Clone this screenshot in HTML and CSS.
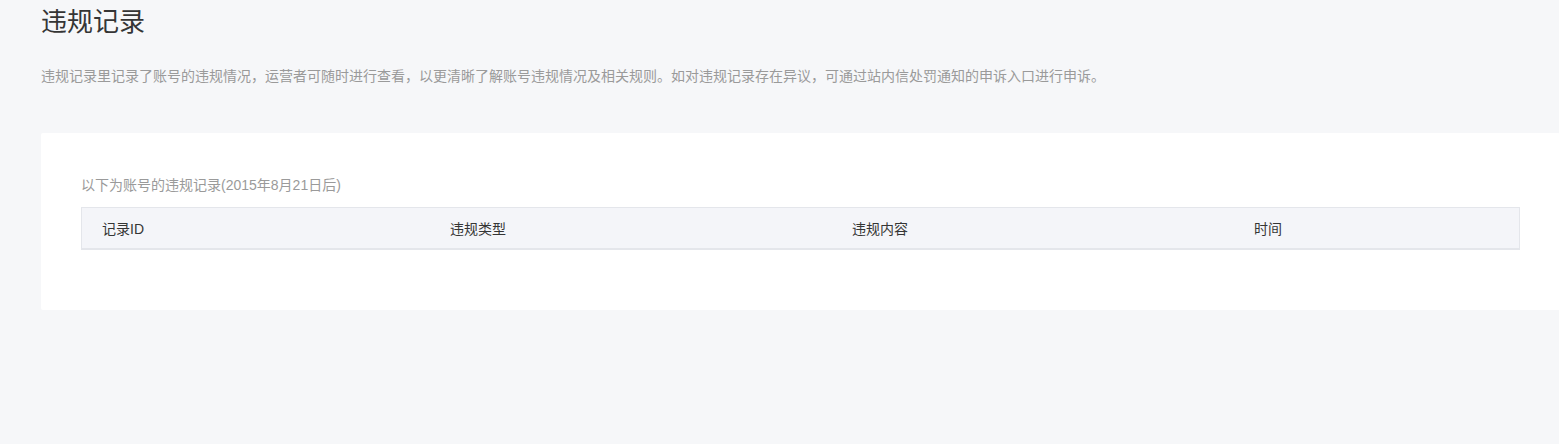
FILE: index.html
```html
<!DOCTYPE html>
<html lang="zh-CN">
<head>
  <meta charset="UTF-8">
  <title>违规记录</title>
  <link rel="stylesheet" href="styles.css">
</head>
<body>
  <div class="page">
    <h2 class="page-title">违规记录</h2>
    <p class="page-desc">违规记录里记录了账号的违规情况，运营者可随时进行查看，以更清晰了解账号违规情况及相关规则。如对违规记录存在异议，可通过站内信处罚通知的申诉入口进行申诉。</p>

    <div class="card">
      <div class="card-tips">以下为账号的违规记录(2015年8月21日后)</div>
      <table class="record-table">
        <thead>
          <tr>
            <th class="col-id">记录ID</th>
            <th class="col-type">违规类型</th>
            <th class="col-content">违规内容</th>
            <th class="col-time">时间</th>
          </tr>
        </thead>
        <tbody></tbody>
      </table>
    </div>
  </div>
</body>
</html>
```

FILE: styles.css
```css
body {
  margin: 0;
  background-color: #f6f7f9;
  font-family: "Liberation Sans", "Noto Sans CJK SC", sans-serif;
  color: #353535;
}

.page {
  padding: 0 0 0 41px;
}

.page-title {
  margin: 0;
  padding-top: 4px;
  font-size: 26px;
  font-weight: normal;
  line-height: 36px;
  color: #353535;
}

.page-desc {
  margin: 24px 0 0;
  font-size: 14px;
  line-height: 24px;
  color: #9a9a9a;
}

.card {
  margin-top: 45px;
  width: 1519px;
  box-sizing: border-box;
  padding: 40px 40px 60px;
  background: #fff;
  border-radius: 2px;
}

.card-tips {
  font-size: 14px;
  line-height: 24px;
  color: #9a9a9a;
  margin-bottom: 10px;
}

.record-table {
  width: 100%;
  border-collapse: collapse;
  table-layout: fixed;
}

.record-table th {
  height: 40px;
  padding: 0 20px;
  text-align: left;
  font-size: 14px;
  font-weight: normal;
  color: #353535;
  background: #f4f5f9;
  border-top: 1px solid #e4e6eb;
  border-bottom: 2px solid #e4e6eb;
}

.record-table th:first-child {
  border-left: 1px solid #e4e6eb;
}

.record-table th:last-child {
  border-right: 1px solid #e4e6eb;
}

.col-id { width: 308px; }
.col-type { width: 362px; }
.col-content { width: 362px; }
```
